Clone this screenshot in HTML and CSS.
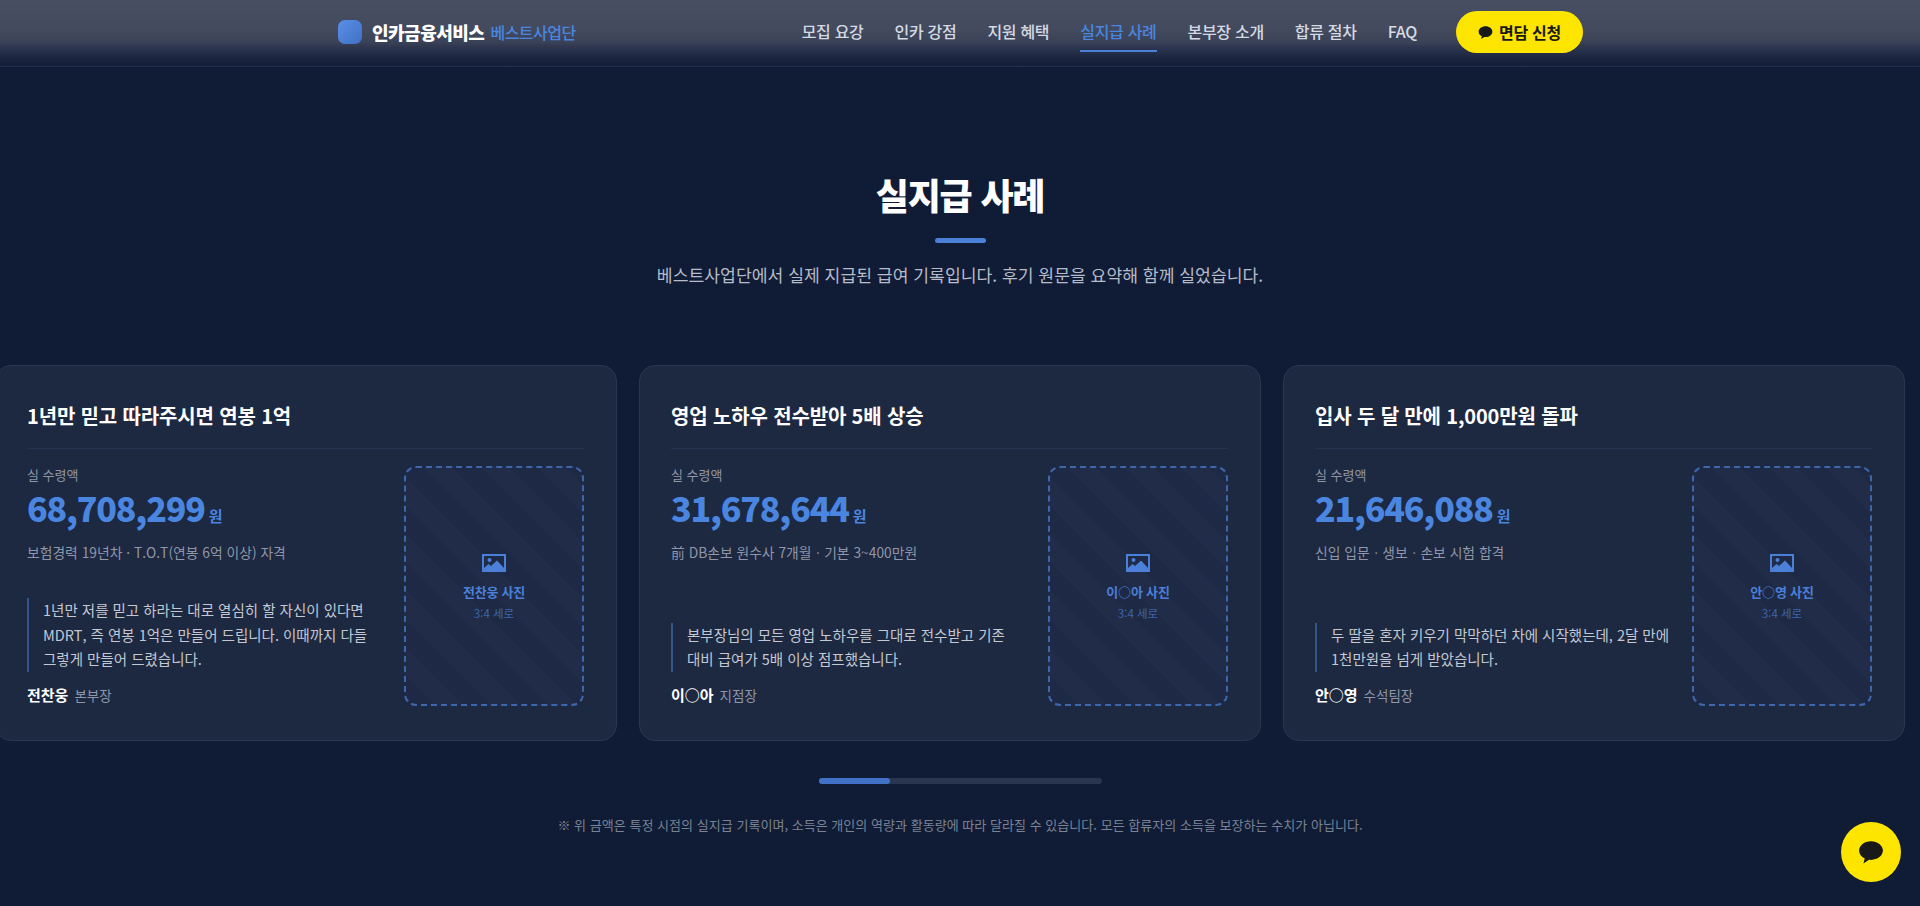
FILE: index.html
```html
<!DOCTYPE html>
<html lang="ko">
<head>
  <meta charset="UTF-8">
  <title>실지급 사례</title>
  <link rel="stylesheet" href="styles.css">
</head>
<body>
  <header class="header">
    <div class="header-inner">
      <a class="brand" href="#">
        <span class="brand-mark"></span>
        <span class="brand-name">인카금융서비스</span>
        <span class="brand-sub">베스트사업단</span>
      </a>
      <nav class="nav">
        <a href="#">모집 요강</a>
        <a href="#">인카 강점</a>
        <a href="#">지원 혜택</a>
        <a href="#" class="active">실지급 사례</a>
        <a href="#">본부장 소개</a>
        <a href="#">합류 절차</a>
        <a href="#">FAQ</a>
      </nav>
      <a class="cta" href="#">
        <svg class="cta-icon" viewBox="0 0 24 24"><path d="M12 2C5.900 2 1 5.900 1 10.700c0 3.100 2.100 5.900 5.200 7.400L5 22.500l5.100-3.300c.6.1 1.300.1 1.900.1 6.100 0 11-3.900 11-8.600S18.100 2 12 2z"/></svg>
        면담 신청
      </a>
    </div>
  </header>

  <section class="section">
    <div class="section-head">
      <h2>실지급 사례</h2>
      <div class="title-bar"></div>
      <p>베스트사업단에서 실제 지급된 급여 기록입니다. 후기 원문을 요약해 함께 실었습니다.</p>
    </div>

    <div class="track">
      <article class="card">
        <h3>1년만 믿고 따라주시면 연봉 1억</h3>
        <div class="card-body">
          <div class="info">
            <div class="label">실 수령액</div>
            <div class="amount">68,708,299<small>원</small></div>
            <div class="desc">보험경력 19년차 · T.O.T(연봉 6억 이상) 자격</div>
            <blockquote>1년만 저를 믿고 하라는 대로 열심히 할 자신이 있다면 MDRT, 즉 연봉 1억은 만들어 드립니다. 이때까지 다들 그렇게 만들어 드렸습니다.</blockquote>
            <div class="person"><strong>전찬웅</strong><span>본부장</span></div>
          </div>
          <div class="photo">
            <svg class="photo-icon" viewBox="0 0 24 18"><path fill-rule="evenodd" d="M0 0h24v18H0zM2 2v14h20V2z"/><circle cx="7.500" cy="6" r="2"/><path d="M2 16v-2l4.500-4 2.500 2 6-5.500L22 14v2z"/></svg>
            <div class="photo-name">전찬웅 사진</div>
            <div class="photo-ratio">3:4 세로</div>
          </div>
        </div>
      </article>

      <article class="card">
        <h3>영업 노하우 전수받아 5배 상승</h3>
        <div class="card-body">
          <div class="info">
            <div class="label">실 수령액</div>
            <div class="amount">31,678,644<small>원</small></div>
            <div class="desc">前 DB손보 원수사 7개월ㆍ기본 3~400만원</div>
            <blockquote>본부장님의 모든 영업 노하우를 그대로 전수받고 기존 대비 급여가 5배 이상 점프했습니다.</blockquote>
            <div class="person"><strong>이○아</strong><span>지점장</span></div>
          </div>
          <div class="photo">
            <svg class="photo-icon" viewBox="0 0 24 18"><path fill-rule="evenodd" d="M0 0h24v18H0zM2 2v14h20V2z"/><circle cx="7.500" cy="6" r="2"/><path d="M2 16v-2l4.500-4 2.500 2 6-5.500L22 14v2z"/></svg>
            <div class="photo-name">이○아 사진</div>
            <div class="photo-ratio">3:4 세로</div>
          </div>
        </div>
      </article>

      <article class="card">
        <h3>입사 두 달 만에 1,000만원 돌파</h3>
        <div class="card-body">
          <div class="info">
            <div class="label">실 수령액</div>
            <div class="amount">21,646,088<small>원</small></div>
            <div class="desc">신입 입문ㆍ생보ㆍ손보 시험 합격</div>
            <blockquote>두 딸을 혼자 키우기 막막하던 차에 시작했는데, 2달 만에 1천만원을 넘게 받았습니다.</blockquote>
            <div class="person"><strong>안○영</strong><span>수석팀장</span></div>
          </div>
          <div class="photo">
            <svg class="photo-icon" viewBox="0 0 24 18"><path fill-rule="evenodd" d="M0 0h24v18H0zM2 2v14h20V2z"/><circle cx="7.500" cy="6" r="2"/><path d="M2 16v-2l4.500-4 2.500 2 6-5.500L22 14v2z"/></svg>
            <div class="photo-name">안○영 사진</div>
            <div class="photo-ratio">3:4 세로</div>
          </div>
        </div>
      </article>
    </div>

    <div class="progress"><div class="progress-thumb"></div></div>
    <p class="note">※ 위 금액은 특정 시점의 실지급 기록이며, 소득은 개인의 역량과 활동량에 따라 달라질 수 있습니다. 모든 합류자의 소득을 보장하는 수치가 아닙니다.</p>
  </section>

  <a class="fab" href="#">
    <svg viewBox="0 0 24 24"><path d="M12 2C5.900 2 1 5.900 1 10.700c0 3.100 2.100 5.900 5.200 7.400L5 22.500l5.100-3.300c.6.1 1.300.1 1.900.1 6.100 0 11-3.900 11-8.600S18.100 2 12 2z"/></svg>
  </a>
</body>
</html>
```

FILE: styles.css
```css
* {
  box-sizing: border-box;
}
html, body {
  margin: 0;
  height: 906px;
  overflow: hidden;
}
body {
  font-family: "Noto Sans CJK KR", "Noto Sans", sans-serif;
  background: #101b35;
  color: #fff;
}
a {
  text-decoration: none;
  color: inherit;
}

.header {
  height: 67px;
  border-bottom: 1px solid #253152;
  background: linear-gradient(#484f62 0, #434a5e 30px, #3a4258 42px, #28314a 50px, #1b2540 58px, #141e39 66px);
}
.header-inner {
  height: 66px;
  padding: 0 337px 2px 338px;
  display: flex;
  align-items: center;
  justify-content: space-between;
}
.brand {
  display: flex;
  align-items: center;
}
.brand-mark {
  width: 24px;
  height: 24px;
  border-radius: 7px;
  background: linear-gradient(135deg, #5b8fe8, #3f70c4);
  margin-right: 10px;
}
.brand-name {
  font-size: 18px;
  font-weight: 900;
  letter-spacing: -0.5px;
}
.brand-sub {
  font-size: 16px;
  font-weight: 500;
  color: #4a86e0;
  margin-left: 6px;
  letter-spacing: -0.5px;
}
.nav {
  margin-left: auto;
  display: flex;
  gap: 31px;
  font-size: 16px;
  font-weight: 500;
  letter-spacing: -0.3px;
  color: #d5d9e2;
}
.nav a {
  padding: 6px 0 7px;
  margin-top: 1px;
  border-bottom: 2px solid transparent;
}
.nav a.active {
  color: #4a86e0;
  border-bottom-color: #4a80d8;
}
.cta {
  margin-left: 39px;
  width: 127px;
  height: 42px;
  border-radius: 21px;
  background: #fee500;
  color: #191919;
  font-size: 16px;
  font-weight: 700;
  letter-spacing: -0.3px;
  display: flex;
  align-items: center;
  justify-content: center;
  gap: 6px;
}
.cta-icon {
  width: 15px;
  height: 15px;
  fill: #191919;
}

.section {
  padding-top: 101px;
}
.section-head {
  text-align: center;
}
.section-head h2 {
  margin: 0;
  font-size: 36px;
  font-weight: 900;
  letter-spacing: -1.2px;
  line-height: 52px;
}
.title-bar {
  width: 51px;
  height: 5px;
  border-radius: 3px;
  background: #4a80d8;
  margin: 18px auto 0;
}
.section-head p {
  margin: 17px 0 0;
  font-size: 17.2px;
  line-height: 30px;
  color: #b6bcc9;
}

.track {
  display: flex;
  gap: 22px;
  margin: 75px 0 0 -5px;
  width: 2000px;
}
.card {
  width: 622px;
  height: 376px;
  flex: none;
  padding: 32px 32px 32px 31px;
  background: #1d2841;
  border: 1px solid #2a3550;
  border-radius: 16px;
  display: flex;
  flex-direction: column;
}
.card h3 {
  margin: 0;
  padding-bottom: 15px;
  padding-top: 1px;
  font-size: 20px;
  font-weight: 700;
  letter-spacing: -0.15px;
  line-height: 34px;
  border-bottom: 1px solid #273350;
}
.card-body {
  flex: 1;
  display: flex;
  gap: 20px;
  padding-top: 17px;
  min-height: 0;
}
.info {
  flex: 1;
  min-width: 0;
  display: flex;
  flex-direction: column;
}
.label {
  font-size: 13px;
  line-height: 18px;
  color: #8f97a8;
}
.amount {
  margin-top: 2px;
  font-size: 34px;
  font-weight: 900;
  line-height: 44px;
  color: #4a86e0;
  letter-spacing: -1.2px;
}
.amount small {
  font-size: 15px;
  font-weight: 700;
  margin-left: 4px;
  letter-spacing: 0;
}
.desc {
  margin-top: 3px;
  font-size: 13.8px;
  line-height: 22px;
  color: #8f97a8;
}
blockquote {
  margin: auto 0 0;
  padding-left: 14px;
  border-left: 2px solid #35558f;
  font-size: 14.5px;
  line-height: 24.6px;
  color: #c3c8d3;
  word-break: keep-all;
}
.person {
  margin-top: 11px;
  margin-bottom: 1px;
  display: flex;
  align-items: center;
  gap: 6px;
  line-height: 24px;
}
.person strong {
  font-size: 15px;
  font-weight: 700;
}
.person span {
  font-size: 13.5px;
  color: #8f97a8;
}
.photo {
  width: 180px;
  height: 240px;
  flex: none;
  padding-top: 4px;
  border: 2px dashed #3d66ab;
  border-radius: 12px;
  background: repeating-linear-gradient(45deg, #1e2945 0, #1e2945 20px, #212c49 20px, #212c49 40px);
  display: flex;
  flex-direction: column;
  align-items: center;
  justify-content: center;
  color: #4a80d8;
}
.photo-icon {
  width: 24px;
  height: 18px;
  fill: #4a80d8;
}
.photo-name {
  margin-top: 10px;
  font-size: 13px;
  font-weight: 700;
  letter-spacing: -0.2px;
  line-height: 20px;
}
.photo-ratio {
  margin-top: 2px;
  font-size: 11.5px;
  line-height: 18px;
  color: #3d66ab;
}

.progress {
  width: 283px;
  height: 6px;
  margin: 37px auto 0;
  border-radius: 3px;
  background: #2a3550;
}
.progress-thumb {
  width: 71px;
  height: 6px;
  border-radius: 3px;
  background: #4272c8;
}
.note {
  margin: 29px 0 0;
  text-align: center;
  font-size: 13.05px;
  line-height: 24px;
  color: #7b8394;
}

.fab {
  position: fixed;
  right: 19px;
  bottom: 24px;
  width: 60px;
  height: 60px;
  border-radius: 50%;
  background: #fee500;
  display: flex;
  align-items: center;
  justify-content: center;
}
.fab svg {
  width: 26px;
  height: 26px;
  fill: #191919;
}
```
